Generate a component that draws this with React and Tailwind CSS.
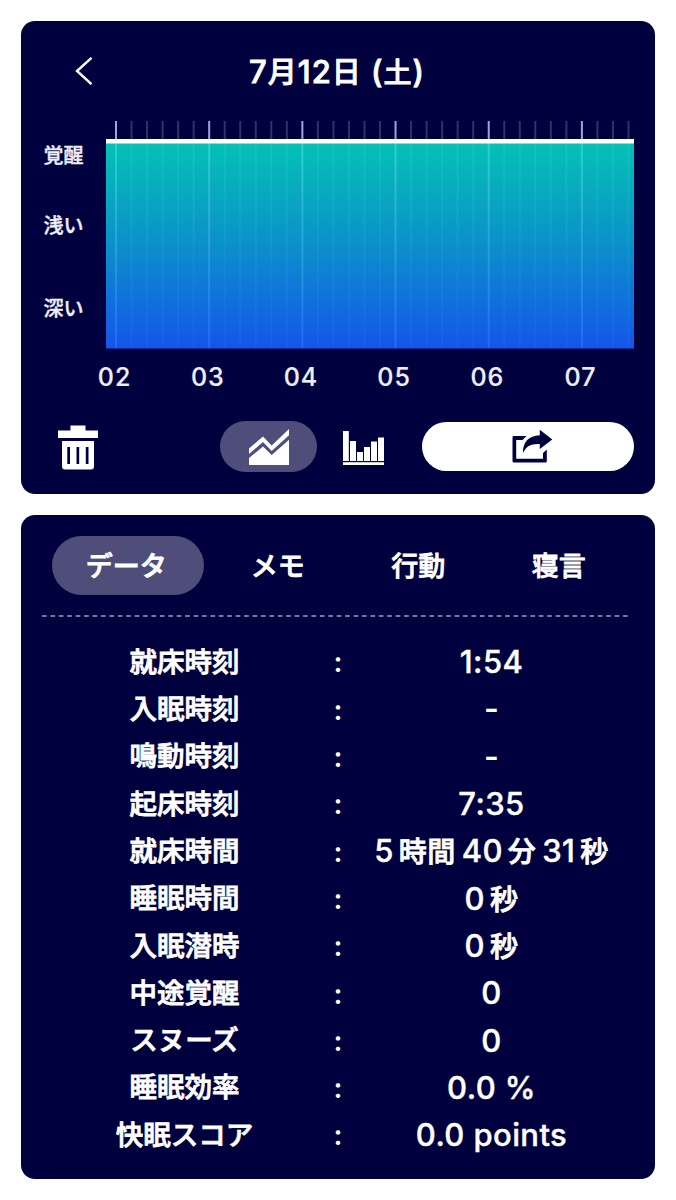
const TABS = ["データ", "メモ", "行動", "寝言"];

const HOURS = ["02", "03", "04", "05", "06", "07"];

const ROWS = [
  { label: "就床時刻", value: "1:54" },
  { label: "入眠時刻", value: "-" },
  { label: "鳴動時刻", value: "-" },
  { label: "起床時刻", value: "7:35" },
  { label: "就床時間", value: [5, "時間", 40, "分", 31, "秒"] },
  { label: "睡眠時間", value: [0, "秒"] },
  { label: "入眠潜時", value: [0, "秒"] },
  { label: "中途覚醒", value: "0" },
  { label: "スヌーズ", value: "0" },
  { label: "睡眠効率", value: "0.0 %" },
  { label: "快眠スコア", value: "0.0 points" },
];

// one tick every 10 minutes, the hour ticks are brighter
const TICKS = Array.from({ length: 34 }, (_, i) => ({
  x: 10 + i * 15.53,
  major: i % 6 === 0,
}));

const SleepChart = () => (
  <svg width="528" height="228" viewBox="0 0 528 228" className="block">
    <defs>
      <linearGradient id="sleep" x1="0" y1="0" x2="0" y2="1">
        <stop offset="0" stopColor="#04c2b5" />
        <stop offset="0.5" stopColor="#0b90cb" />
        <stop offset="1" stopColor="#1455ea" />
      </linearGradient>
      <linearGradient id="grid" x1="0" y1="0" x2="0" y2="1">
        <stop offset="0" stopColor="#5ef0e0" stopOpacity="0.42" />
        <stop offset="1" stopColor="#5ea0ff" stopOpacity="0.24" />
      </linearGradient>
    </defs>
    {TICKS.map(({ x, major }) => (
      <rect
        key={x}
        x={x - 1}
        y="0"
        width="2"
        height="20"
        fill={major ? "#a5a3cf" : "#33315f"}
      />
    ))}
    <rect x="0" y="20" width="528" height="207.5" fill="url(#sleep)" />
    {TICKS.map(({ x, major }) => (
      <rect
        key={x}
        x={x - 1}
        y="22"
        width="2"
        height="205.5"
        fill="url(#grid)"
        opacity={major ? 1 : 0.3}
      />
    ))}
    <rect x="0" y="18" width="528" height="4.5" fill="#fff" />
  </svg>
);

const TrashIcon = () => (
  <svg width="40" height="45" viewBox="0 0 40 45" fill="#fff">
    <path d="M12.500 .5h15v5H40v7.500H0V5.500h12.500z" />
    <path
      fillRule="evenodd"
      d="M4 16h32v25.500a3 3 0 0 1-3 3H7a3 3 0 0 1-3-3zM9.300 22v17h2.700V22zM18.500 22v17h2.700V22zM27.800 22v17h2.700V22z"
    />
  </svg>
);

const AreaIcon = () => (
  <svg width="40" height="36" viewBox="0 0 40 36" fill="#fff">
    <path d="M0 19.500 14 7.500 22.700 16.500 40 0v6.300L22.700 22 14 13 0 25z" />
    <path d="M0 29 14 17.500 22.700 26 40 10.800V36H0z" />
  </svg>
);

const BarsIcon = () => (
  <svg width="42" height="35" viewBox="0 0 42 35" fill="#fff">
    <rect x="0" width="5.800" height="30" />
    <rect x="7" y="10" width="6" height="20" />
    <rect x="14" y="21" width="6" height="9" />
    <rect x="21" y="16" width="6" height="14" />
    <rect x="28" y="10.500" width="6" height="19.500" />
    <rect x="35" y="6.500" width="6" height="23.500" />
    <rect x="0" y="31.200" width="41" height="2.800" />
  </svg>
);

const ShareIcon = () => (
  <svg width="42" height="35" viewBox="0 0 42 35" fill="#00003f">
    <path d="M15.500 7 11.500 11H5.200V29.800H32V24L35.800 20.500V32.300a1.300 1.300 0 0 1-1.300 1.300H2.800a1.300 1.300 0 0 1-1.300-1.300V8.300A1.300 1.300 0 0 1 2.800 7z" />
    <path d="M28.800 .7 41.300 10.500 28.800 20V15C20 14.500 15.500 17 12 24 11.500 13.500 17.500 6.500 28.800 6.200z" />
  </svg>
);

const ChartCard = () => (
  <section className="h-[473px] rounded-[14px] bg-[#00003f]">
    <header className="grid h-[100px] grid-cols-[100px_1fr_100px] items-center">
      <svg
        width="18"
        height="28"
        viewBox="0 0 18 28"
        className="ml-[54px]"
        fill="none"
        stroke="#fff"
        strokeWidth="2.4"
      >
        <path d="M16.500 .8 2 14 16.500 27.200" />
      </svg>
      <h1 className="pt-0.5 pr-0.5 text-center text-[31px] font-medium tracking-[1px] [-webkit-text-stroke:0.8px_white]">
        7<span className="text-[29px]">月</span>12
        <span className="text-[29px]">日</span> (<span className="text-[28px]">土</span>)
      </h1>
    </header>
    <div className="flex h-[228px]">
      <div className="flex w-[85px] flex-col pt-5 pl-[22.500px] text-[20px] leading-[30px] font-medium text-[#eeeefa] [-webkit-text-stroke:0.4px_#eeeefa]">
        <span>覚醒</span>
        <span className="mt-10">浅い</span>
        <span className="mt-[53px]">深い</span>
      </div>
      <SleepChart />
    </div>
    <div className="ml-[47px] flex h-14 items-center pt-0.5 text-[25px] font-medium text-[#eeeefa] [-webkit-text-stroke:0.2px_#eeeefa]">
      {HOURS.map((hour) => (
        <span key={hour} className="w-[93.200px] text-center tracking-[1px]">
          {hour}
        </span>
      ))}
    </div>
    <div className="mt-4 flex h-[51px] items-center pr-[21px] pl-[37px]">
      <div className="pt-px">
        <TrashIcon />
      </div>
      <button className="ml-[122px] flex h-[51px] w-[97px] items-center justify-center rounded-full bg-[#4f4e7b]">
        <AreaIcon />
      </button>
      <button className="ml-[25.500px] pt-1">
        <BarsIcon />
      </button>
      <button className="ml-auto flex h-[49px] w-[212px] items-center justify-center rounded-full bg-white pl-2">
        <ShareIcon />
      </button>
    </div>
  </section>
);

const DataValue = ({ value }) => {
  if (!Array.isArray(value)) return <span>{value}</span>;
  return value.map((part, i) => (
    <span
      key={i}
      className={
        typeof part === "string"
          ? "mr-1.5 ml-[5px] text-[28px] [-webkit-text-stroke:0.8px_white] last:mr-0"
          : ""
      }
    >
      {part}
    </span>
  ));
};

const DataCard = () => (
  <section className="mt-[21px] h-[664px] rounded-[14px] bg-[#00003f] pt-[21px]">
    <nav className="flex h-[59px] items-center pl-[31px] text-[27px] font-medium [-webkit-text-stroke:0.8px_white]">
      {TABS.map((tab, i) => (
        <button
          key={tab}
          className={
            i === 0
              ? "mr-1 h-[59px] w-[151.500px] rounded-full bg-[#4f4e7b] pt-1 pr-[3px]"
              : "h-[59px] w-[140.500px] pt-1"
          }
        >
          {tab}
        </button>
      ))}
    </nav>
    <svg width="589" height="2" className="mt-5 ml-[21px] block">
      <path d="M0 1h589" stroke="#7775a8" strokeWidth="2" strokeDasharray="4.700 3.720" />
    </svg>
    <dl className="mt-[21.800px] pl-[46.500px] font-medium">
      {ROWS.map(({ label, value }) => (
        <div key={label} className="flex h-[47.300px] items-center">
          <dt className="w-[234px] text-center text-[27.500px] [-webkit-text-stroke:0.8px_white]">
            {label}
          </dt>
          <span className="w-[73px] text-center text-[28px] font-semibold">:</span>
          <dd className="flex w-[234px] items-baseline justify-center text-[31px] tracking-[0.4px] whitespace-nowrap [-webkit-text-stroke:0.4px_white]">
            <DataValue value={value} />
          </dd>
        </div>
      ))}
    </dl>
  </section>
);

const App = () => (
  <main
    lang="ja"
    className="h-[1200px] w-[676px] bg-white px-[21px] pt-[21px] font-['Inter','Noto_Sans_CJK_JP',sans-serif] text-white"
  >
    <ChartCard />
    <DataCard />
  </main>
);

export default App;
